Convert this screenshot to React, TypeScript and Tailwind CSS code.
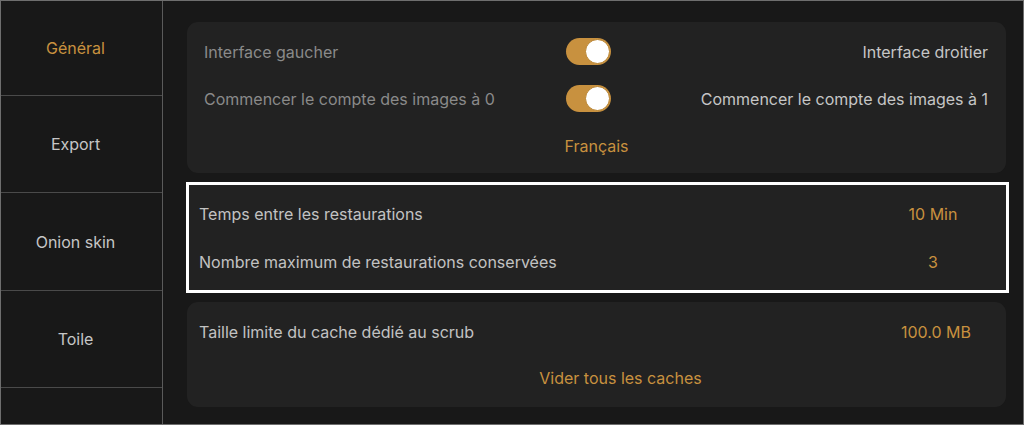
import React from "react";

const font = { fontFamily: "Inter, 'Noto Sans', sans-serif" };

function Toggle() {
  return (
    <div className="relative w-[45px] h-[27px] rounded-full bg-[#c8913f]">
      <div className="absolute right-[1px] top-[1px] w-[25px] h-[25px] rounded-full bg-white border border-[#b9832f]" />
    </div>
  );
}

const tabs = [
  { label: "Général", h: "h-[95px]" },
  { label: "Export", h: "h-[97px]" },
  { label: "Onion skin", h: "h-[98px]" },
  { label: "Toile", h: "h-[97px]" },
  { label: "", h: "h-[60px]" },
];

export default function App() {
  return (
    <div
      className="w-[1024px] h-[425px] overflow-hidden bg-[#181818] border border-[#6e6e6e] flex text-[16px]"
      style={font}
    >
      {/* Sidebar */}
      <div className="w-[162px] shrink-0 border-r border-[#5a5a5a] flex flex-col">
        {tabs.map((t, i) => (
          <div
            key={i}
            className={`${t.h} shrink-0 flex items-center justify-center pr-[12px] border-b border-[#4a4a4a] ${
              i === 0 ? "text-[#c8913f]" : "text-[#c6c6c6]"
            }`}
          >
            {t.label}
          </div>
        ))}
      </div>

      {/* Main */}
      <div className="flex-1 pl-[24px] pr-[17px] pt-[21px] flex flex-col">
        <div className="rounded-[11px] bg-[#222222] pt-[6px] pb-[4px] h-[151px]">
          <div className="grid grid-cols-[362px_45px_1fr] items-center h-[47px] pl-[17px] pr-[18px]">
            <span className="text-[#8a8a8a]">Interface gaucher</span>
            <Toggle />
            <span className="text-right text-[#c6c6c6]">Interface droitier</span>
          </div>
          <div className="grid grid-cols-[362px_45px_1fr] items-center h-[47px] pl-[17px] pr-[18px]">
            <span className="text-[#8a8a8a] whitespace-nowrap">Commencer le compte des images à 0</span>
            <Toggle />
            <span className="text-right text-[#c6c6c6] whitespace-nowrap">Commencer le compte des images à 1</span>
          </div>
          <div className="h-[47px] flex items-center justify-center text-[#c8913f]">Français</div>
        </div>

        <div className="mt-[9px] -ml-[1px] -mr-[3px] h-[111px] border-[3px] border-white bg-[#222222] pt-[5px] text-[#c2c2c2]">
          <div className="h-[48px] flex items-center pl-[10px]">
            <span className="flex-1">Temps entre les restaurations</span>
            <span className="w-[120px] text-center text-[#c8913f] mr-[13px]">10 Min</span>
          </div>
          <div className="h-[48px] flex items-center pl-[10px]">
            <span className="flex-1">Nombre maximum de restaurations conservées</span>
            <span className="w-[120px] text-center text-[#c8913f] mr-[13px]">3</span>
          </div>
        </div>

        <div className="mt-[9px] rounded-[11px] bg-[#222222] h-[105px] pt-[7px] text-[#c2c2c2]">
          <div className="h-[46px] flex items-center pl-[12px]">
            <span className="flex-1">Taille limite du cache dédié au scrub</span>
            <span className="w-[120px] text-center text-[#c8913f] mr-[10px]">100.0 MB</span>
          </div>
          <div className="h-[46px] flex items-center justify-center text-[#c8913f] pl-[48px]">
            Vider tous les caches
          </div>
        </div>
      </div>
    </div>
  );
}
